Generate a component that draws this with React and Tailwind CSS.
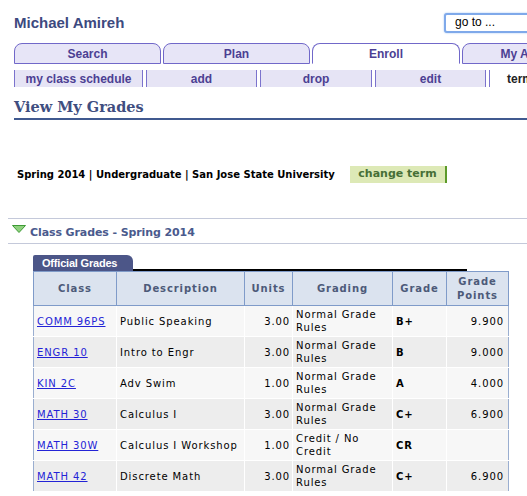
import React from "react";

const rows = [
  { cls: "COMM 96PS", desc: "Public Speaking", units: "3.00", grading: ["Normal Grade", "Rules"], grade: "B+", pts: "9.900" },
  { cls: "ENGR 10", desc: "Intro to Engr", units: "3.00", grading: ["Normal Grade", "Rules"], grade: "B", pts: "9.000" },
  { cls: "KIN 2C", desc: "Adv Swim", units: "1.00", grading: ["Normal Grade", "Rules"], grade: "A", pts: "4.000" },
  { cls: "MATH 30", desc: "Calculus I", units: "3.00", grading: ["Normal Grade", "Rules"], grade: "C+", pts: "6.900" },
  { cls: "MATH 30W", desc: "Calculus I Workshop", units: "1.00", grading: ["Credit / No", "Credit"], grade: "CR", pts: "" },
  { cls: "MATH 42", desc: "Discrete Math", units: "3.00", grading: ["Normal Grade", "Rules"], grade: "C+", pts: "6.900" },
];

const tabs = [
  { label: "Search", w: "w-[147px]", active: false },
  { label: "Plan", w: "w-[147px]", active: false },
  { label: "Enroll", w: "w-[148px]", active: true },
  { label: "My Academics", w: "w-[160px]", active: false },
];

const subtabs = [
  { label: "my class schedule", w: "w-[129px]" },
  { label: "add", w: "w-[111px]" },
  { label: "drop", w: "w-[112px]" },
  { label: "edit", w: "w-[111px]" },
  { label: "term information", w: "w-[150px]", active: true },
];

export default function App() {
  return (
    <div className="w-[527px] h-[496px] overflow-hidden bg-white font-['Liberation_Sans',Arial,sans-serif]">
      {/* header */}
      <div className="flex items-start justify-between pl-[14px] pt-[13px] h-[43px] w-[527px] overflow-hidden">
        <div className="text-[15px] font-bold text-[#3d4a7f] leading-[18px] pt-[1px]">Michael Amireh</div>
        <div className="w-[100px] shrink-0 ml-auto mr-[-17px] h-[20px] rounded-[3px] border-2 border-[#7fa9ea] bg-white pl-[9px] text-[12px] leading-[15px] text-black shadow-[0_0_2px_#9cc0f2]">
          go to ...
        </div>
      </div>

      {/* tabs */}
      <div className="flex items-end pl-[14px] gap-[2px] h-[21px] w-[700px]">
        {tabs.map((t) => (
          <div
            key={t.label}
            className={`${t.w} shrink-0 h-[21px] rounded-t-[8px] border border-[#7168c9] flex items-center justify-center text-[12px] font-bold text-[#4c3f93] ${
              t.active ? "bg-white border-b-white" : "bg-[#e7e5f7]"
            }`}
          >
            {t.label}
          </div>
        ))}
      </div>

      {/* subtabs */}
      <div className="flex pl-[14px] gap-[3px] mt-[6px] h-[17px] w-[700px]">
        {subtabs.map((s) => (
          <div
            key={s.label}
            className={`${s.w} shrink-0 h-[17px] border-l border-r border-[#7b73cd] flex items-center text-[12px] font-bold ${
              s.active ? "bg-white text-[#222] border-r-white justify-start pl-[17px]" : "bg-[#e6e4f5] text-[#4c3f93] justify-center"
            }`}
          >
            {s.label}
          </div>
        ))}
      </div>

      {/* heading */}
      <div className="ml-[14px] mt-[10px] pb-[2px] border-b-2 border-[#40598f]">
        <div className="font-['DejaVu_Serif',Georgia,serif] font-bold text-[14.5px] leading-[19px] text-[#3f4e80] tracking-[0px]">
          View My Grades
        </div>
      </div>

      {/* term row */}
      <div className="flex items-center mt-[46px] pl-[17px] h-[17px]">
        <div className="w-[333px] shrink-0 whitespace-nowrap font-['DejaVu_Sans',Verdana,sans-serif] font-bold text-[10px] text-black">
          Spring 2014 | Undergraduate | San Jose State University
        </div>
        <div className="w-[97px] h-[17px] bg-[#dde9b6] border-r-2 border-[#5c9a2a] flex items-center justify-center font-['DejaVu_Sans',Verdana,sans-serif] font-bold text-[11px] text-[#466f36]">
          change term
        </div>
      </div>

      {/* section header */}
      <div className="ml-[8px] mt-[35px] border-t border-b border-[#c4c9da] h-[26px] flex items-center">
        <svg width="14" height="8" viewBox="0 0 14 8" className="ml-[4px] mt-[-4px]">
          <polygon points="0.5,0.5 13.5,0.5 7,7.5" fill="#8fd17e" stroke="#3e9a36" strokeWidth="1" />
        </svg>
        <div className="ml-[4px] pt-[5px] font-['DejaVu_Sans',Verdana,sans-serif] font-bold text-[11px] text-[#4a5a8d] tracking-[-0.1px]">
          Class Grades - Spring 2014
        </div>
      </div>

      {/* official grades tab */}
      <div className="ml-[33px] mt-[11px] flex items-end">
        <div className="w-[100px] h-[16px] bg-[#4c5688] rounded-tr-[6px] rounded-tl-[2px] text-white text-[11px] font-bold flex items-center pl-[9px] tracking-[-0.2px]">
          Official Grades
        </div>
        <div className="w-[334px] h-[2px] bg-black" />
      </div>

      {/* table */}
      <table className="ml-[33px] border-collapse w-[475px] table-fixed font-['DejaVu_Sans',Verdana,sans-serif] text-[10px] tracking-[0.9px] border border-[#9aaed0]">
        <colgroup>
          <col className="w-[83px]" />
          <col className="w-[128px]" />
          <col className="w-[48px]" />
          <col className="w-[100px]" />
          <col className="w-[54px]" />
          <col className="w-[62px]" />
        </colgroup>
        <thead>
          <tr className="h-[34px] bg-[#dbe3ef] text-[#4d5a79] font-bold">
            {["Class", "Description", "Units", "Grading", "Grade"].map((h) => (
              <th key={h} className="border border-[#7f9bc9] text-center font-bold p-0">{h}</th>
            ))}
            <th className="border border-[#7f9bc9] text-center font-bold p-0 leading-[14px]">
              Grade<br />Points
            </th>
          </tr>
        </thead>
        <tbody>
          {rows.map((r, i) => (
            <tr key={r.cls} className={`h-[31px] ${i % 2 === 0 ? "bg-[#f7f7f7]" : "bg-[#ededed]"}`}>
              <td className="border border-white pl-[3px] p-0 border-l-[#9aaed0]">
                <a className="text-[#2323d6] underline" href="#">{r.cls}</a>
              </td>
              <td className="border border-white pl-[3px] text-black">{r.desc}</td>
              <td className="border border-white pr-[2px] text-right text-black">{r.units}</td>
              <td className="border border-white pl-[3px] text-black leading-[13px]">
                {r.grading[0]}<br />{r.grading[1]}
              </td>
              <td className="border border-white pl-[3px] font-bold text-black">{r.grade}</td>
              <td className="border border-white pr-[4px] text-right text-black border-r-[#9aaed0]">{r.pts}</td>
            </tr>
          ))}
        </tbody>
      </table>
    </div>
  );
}
